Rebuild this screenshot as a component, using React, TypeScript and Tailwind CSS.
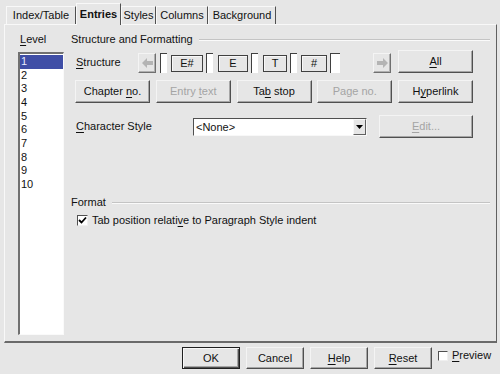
import React from "react";

const FONT = { fontFamily: '"Liberation Sans", Arial, sans-serif' };

function U({ children }: { children: React.ReactNode }) {
  return <span className="underline underline-offset-[2px] decoration-[1px]">{children}</span>;
}

function Btn({
  children,
  disabled,
  w,
}: {
  children: React.ReactNode;
  disabled?: boolean;
  w: string;
}) {
  return (
    <div
      className={`${w} h-[23px] flex items-center justify-center border border-t-[#f4f4f4] border-l-[#f4f4f4] border-r-[#505050] border-b-[#505050] shadow-[inset_-1px_-1px_0_#a6a6a6] ${
        disabled ? "text-[#a4a4a4]" : "text-[#111]"
      }`}
    >
      {children}
    </div>
  );
}

function DlgBtn({ children, def }: { children: React.ReactNode; def?: boolean }) {
  return (
    <div
      className={
        def
          ? "w-[58px] h-[22px] flex items-center justify-center border border-[#202020] shadow-[inset_1px_1px_0_#f8f8f8,inset_-1px_-1px_0_#505050,inset_-2px_-2px_0_#a6a6a6]"
          : "w-[58px] h-[22px] flex items-center justify-center border border-t-[#f4f4f4] border-l-[#f4f4f4] border-r-[#505050] border-b-[#505050] shadow-[inset_-1px_-1px_0_#a6a6a6]"
      }
    >
      {children}
    </div>
  );
}

function ArrowBtn({ dir }: { dir: "left" | "right" }) {
  return (
    <div className="w-[18px] h-[20px] flex items-center justify-center border border-t-[#f4f4f4] border-l-[#f4f4f4] border-r-[#707070] border-b-[#707070] shadow-[inset_-1px_-1px_0_#b0b0b0]">
      <svg width="11" height="10" viewBox="0 0 11 10">
        {dir === "left" ? (
          <path d="M0 5 L5 0 L5 3 L11 3 L11 7 L5 7 L5 10 Z" fill="#b4b4b4" />
        ) : (
          <path d="M11 5 L6 0 L6 3 L0 3 L0 7 L6 7 L6 10 Z" fill="#b4b4b4" />
        )}
      </svg>
    </div>
  );
}

function Slot({ w }: { w: string }) {
  return <div className={`${w} h-[20px] bg-white border-l border-t border-l-[#404040] border-t-[#404040]`} />;
}

function Token({ w, children }: { w: string; children: React.ReactNode }) {
  return (
    <div className={`${w} h-[17px] mb-[1px] flex items-center justify-center border border-[#404040] shadow-[inset_1px_1px_0_#f8f8f8] text-[#111]`}>
      {children}
    </div>
  );
}

function SectionHeader({ title }: { title: string }) {
  return (
    <div className="flex items-center h-[13px]">
      <span className="whitespace-nowrap leading-[13px]">{title}</span>
      <div className="flex-1 ml-[6px] h-[2px] border-t border-t-[#c4c4c4] border-b border-b-[#fafafa]" />
    </div>
  );
}

function Tab({ label, w, active }: { label: string; w: string; active?: boolean }) {
  return active ? (
    <div
      className={`${w} h-[22px] relative z-10 -mb-px bg-[#e6e6e6] flex items-center justify-center font-bold border-t border-l border-r border-t-[#f8f8f8] border-l-[#f8f8f8] border-r-[#505050]`}
    >
      {label}
    </div>
  ) : (
    <div
      className={`${w} h-[18px] flex items-center justify-center border-t border-l border-r border-t-[#f8f8f8] border-l-[#f8f8f8] border-r-[#505050]`}
    >
      {label}
    </div>
  );
}

export default function App() {
  const levels = ["1", "2", "3", "4", "5", "6", "7", "8", "9", "10"];
  return (
    <div
      className="w-[500px] h-[374px] bg-[#e6e6e6] text-[11px] text-[#111] flex flex-col overflow-hidden"
      style={FONT}
    >
      {/* Tabs */}
      <div className="h-[24px] flex items-end pl-[6px]">
        <Tab label="Index/Table" w="w-[70px]" />
        <Tab label="Entries" w="w-[45px]" active />
        <Tab label="Styles" w="w-[35px]" />
        <Tab label="Columns" w="w-[52px]" />
        <Tab label="Background" w="w-[68px]" />
      </div>

      {/* Panel */}
      <div className="ml-[4px] w-[493px] h-[319px] flex border-t border-l border-t-[#f8f8f8] border-l-[#f8f8f8] border-r border-r-[#606060] border-b-2 border-b-[#6a6a6a]">
        {/* Level column */}
        <div className="pl-[13px] pt-[8px] flex flex-col">
          <div className="h-[13px] leading-[13px] pl-[2px]">
            <U>L</U>evel
          </div>
          <div className="mt-[6px] w-[46px] h-[283px] bg-white border-l-2 border-t-2 border-l-[#707070] border-t-[#707070] border-r border-b border-r-[#fafafa] border-b-[#fafafa] pt-[1px]">
            {levels.map((l, i) => (
              <div
                key={l}
                className={
                  i === 0
                    ? "h-[13.67px] leading-[13.67px] pl-[1px] bg-[#3f4ea6] text-[#e8ecff]"
                    : "h-[13.67px] leading-[13.67px] pl-[1px]"
                }
              >
                {l}
              </div>
            ))}
          </div>
        </div>

        {/* Right column */}
        <div className="ml-[7px] w-[419px] pt-[8px] flex flex-col">
          <SectionHeader title="Structure and Formatting" />

          {/* Structure row */}
          <div className="mt-[4px] h-[23px] flex items-end pl-[5px]">
            <div className="w-[62px] self-end mb-[4px] leading-[13px]">
              <U>S</U>tructure
            </div>
            <ArrowBtn dir="left" />
            <div className="ml-[4px]"><Slot w="w-[7px]" /></div>
            <div className="ml-[4px]"><Token w="w-[32px]">E#</Token></div>
            <div className="ml-[3px]"><Slot w="w-[7px]" /></div>
            <div className="ml-[5px]"><Token w="w-[30px]">E</Token></div>
            <div className="ml-[3px]"><Slot w="w-[7px]" /></div>
            <div className="ml-[5px]"><Token w="w-[24px]">T</Token></div>
            <div className="ml-[3px]"><Slot w="w-[7px]" /></div>
            <div className="ml-[4px]"><Token w="w-[26px]">#</Token></div>
            <div className="ml-[3px]"><Slot w="w-[10px]" /></div>
            <div className="ml-[33px]"><ArrowBtn dir="right" /></div>
            <div className="ml-[7px] self-start">
              <Btn w="w-[75px]">
                <U>A</U>ll
              </Btn>
            </div>
          </div>

          {/* Buttons row */}
          <div className="mt-[7px] flex gap-[5.75px] pl-[4px]">
            <Btn w="w-[75px]">
              Chapter&nbsp;<U>n</U>o.
            </Btn>
            <Btn w="w-[75px]" disabled>
              Entry&nbsp;<U>t</U>ext
            </Btn>
            <Btn w="w-[75px]">
              Ta<U>b</U>&nbsp;stop
            </Btn>
            <Btn w="w-[75px]" disabled>
              Page no.
            </Btn>
            <Btn w="w-[75px]">
              H<U>y</U>perlink
            </Btn>
          </div>

          {/* Character style row */}
          <div className="mt-[12px] flex items-center pl-[5px]">
            <div className="w-[117px] leading-[13px]">
              <U>C</U>haracter Style
            </div>
            <div className="w-[174px] h-[18px] flex bg-white border-l border-t border-l-[#505050] border-t-[#505050] border-r border-b border-r-[#f8f8f8] border-b-[#f8f8f8]">
              <div className="flex-1 pl-[2px] leading-[16px]">&lt;None&gt;</div>
              <div className="w-[13px] h-[16px] bg-[#e6e6e6] flex items-center justify-center border-r border-b border-r-[#606060] border-b-[#606060] border-l border-t border-l-[#f8f8f8] border-t-[#f8f8f8]">
                <svg width="7" height="4" viewBox="0 0 7 4">
                  <path d="M0 0 L7 0 L3.5 4 Z" fill="#000" />
                </svg>
              </div>
            </div>
            <div className="ml-[12px]">
              <Btn w="w-[94px]" disabled>
                <U>E</U>dit...
              </Btn>
            </div>
          </div>

          {/* Format */}
          <div className="mt-[58px]">
            <SectionHeader title="Format" />
          </div>
          <div className="mt-[5px] flex items-center pl-[6px] h-[13px]">
            <div className="w-[11px] h-[11px] bg-white border-l border-t border-l-[#505050] border-t-[#505050] border-r border-b border-r-[#f0f0f0] border-b-[#f0f0f0] flex items-center justify-center">
              <svg width="9" height="9" viewBox="0 0 9 9">
                <path d="M1 4 L3.5 6.5 L8 1.5" stroke="#000" strokeWidth="1.8" fill="none" />
              </svg>
            </div>
            <div className="ml-[4px] leading-[13px]">
              Tab position relati<U>v</U>e to Paragraph Style indent
            </div>
          </div>
        </div>
      </div>

      {/* Bottom buttons */}
      <div className="flex items-start pt-[4px] pl-[182px] gap-[6px]">
        <DlgBtn def>OK</DlgBtn>
        <DlgBtn>Cancel</DlgBtn>
        <DlgBtn>
          <U>H</U>elp
        </DlgBtn>
        <DlgBtn>
          <U>R</U>eset
        </DlgBtn>
        <div className="flex items-center pt-[2px]">
          <div className="w-[10px] h-[10px] bg-white border-l border-t border-l-[#505050] border-t-[#505050] border-r border-b border-r-[#f0f0f0] border-b-[#f0f0f0]" />
          <div className="ml-[4px] leading-[13px]">
            <U>P</U>review
          </div>
        </div>
      </div>
    </div>
  );
}
